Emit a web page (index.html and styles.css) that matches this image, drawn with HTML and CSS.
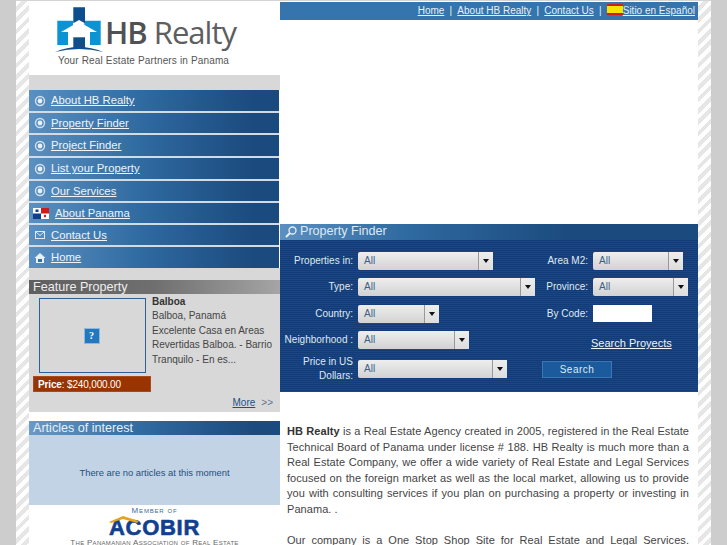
FILE: index.html
```html
<!DOCTYPE html>
<html lang="en">
<head>
<meta charset="utf-8">
<title>HB Realty</title>
<link rel="stylesheet" href="styles.css">
</head>
<body>
<div class="page">
  <aside class="left">
    <div class="logo">
      <div class="logo-row">
        <svg class="logo-mark" width="50" height="46" viewBox="55 7 50 46">
          <path d="M57.300 20.700H73V45H57.300zM84.300 20.700H100.700V45H84.300z" fill="#0e93d2"/>
          <path d="M73.300 7.300H85V23.300L79 20l-5.700 3.300z" fill="#0f4e8c"/>
          <path d="M79 21.700 97 32h-7v13h-5V37.300H73.300V45H68V32h-7z" fill="#fff"/>
          <path d="M73.300 37.300H85V48H73.300z" fill="#0f4e8c"/>
          <path d="M55 52q24-10 48.300 0-24-6-48.300 0z" fill="#0f4e8c"/>
        </svg>
        <span class="logo-text"><b>HB</b> Realty</span>
      </div>
      <div class="tagline">Your Real Estate Partners in Panama</div>
    </div>
    <div class="band"></div>
    <nav class="menu">
      <a class="item tall" href="#"><svg class="ico" width="14" height="14" viewBox="0 0 14 14"><circle cx="7" cy="7" r="4.500" fill="none" stroke="#cfe0ee" stroke-width="1.400"/><circle cx="7" cy="7" r="2.400" fill="#e8f0f6"/></svg><span>About HB Realty</span></a>
      <a class="item" href="#"><svg class="ico" width="14" height="14" viewBox="0 0 14 14"><circle cx="7" cy="7" r="4.500" fill="none" stroke="#cfe0ee" stroke-width="1.400"/><circle cx="7" cy="7" r="2.400" fill="#e8f0f6"/></svg><span>Property Finder</span></a>
      <a class="item tall" href="#"><svg class="ico" width="14" height="14" viewBox="0 0 14 14"><circle cx="7" cy="7" r="4.500" fill="none" stroke="#cfe0ee" stroke-width="1.400"/><circle cx="7" cy="7" r="2.400" fill="#e8f0f6"/></svg><span>Project Finder</span></a>
      <a class="item tall" href="#"><svg class="ico" width="14" height="14" viewBox="0 0 14 14"><circle cx="7" cy="7" r="4.500" fill="none" stroke="#cfe0ee" stroke-width="1.400"/><circle cx="7" cy="7" r="2.400" fill="#e8f0f6"/></svg><span>List your Property</span></a>
      <a class="item" href="#"><svg class="ico" width="14" height="14" viewBox="0 0 14 14"><circle cx="7" cy="7" r="4.500" fill="none" stroke="#cfe0ee" stroke-width="1.400"/><circle cx="7" cy="7" r="2.400" fill="#e8f0f6"/></svg><span>Our Services</span></a>
      <a class="item" href="#"><svg class="flag" width="16" height="11" viewBox="0 0 16 11"><rect width="16" height="11" fill="#fff"/><rect x="8" width="8" height="5.500" fill="#d21a1a"/><rect y="5.500" width="8" height="5.500" fill="#0d3f8c"/><rect x="2.500" y="1.500" width="3" height="2.500" fill="#0d3f8c"/><circle cx="12" cy="8" r="1.200" fill="#d21a1a"/></svg><span>About Panama</span></a>
      <a class="item" href="#"><svg class="ico" width="14" height="14" viewBox="0 0 14 14"><rect x="2.500" y="3.500" width="9" height="7" fill="none" stroke="#dfe9f2" stroke-width="1"/><path d="M2.500 3.500 7 7.500l4.500-4" fill="none" stroke="#dfe9f2"/></svg><span>Contact Us</span></a>
      <a class="item last" href="#"><svg class="ico" width="14" height="14" viewBox="0 0 14 14"><path d="M7 2 1.500 7H3v5h8V7h1.500z" fill="#e8f0f6"/><rect x="5" y="8" width="4" height="3" fill="#3a6d9f"/></svg><span>Home</span></a>
    </nav>
    <div class="band-small"></div>
    <h2 class="feature-head">Feature Property</h2>
    <section class="feature">
      <div class="feature-main">
        <div class="photo"><span class="broken">?</span></div>
        <div class="feature-text">
          <strong>Balboa</strong>
          <p>Balboa, Panamá</p>
          <p>Excelente Casa en Areas Revertidas Balboa. - Barrio Tranquilo - En es...</p>
        </div>
      </div>
      <div class="price"><b>Price</b>: $240,000.00</div>
      <div class="more"><a href="#">More</a><span>&gt;&gt;</span></div>
    </section>
    <h2 class="articles-head">Articles of interest</h2>
    <div class="articles">There are no articles at this moment</div>
    <div class="member">
      <div class="member-of">Member of</div>
      <div class="acobir">
        <svg class="roof" width="30" height="7" viewBox="0 0 30 7"><path d="M0 6 14 0l16 5-2 2L14 3 2 7z" fill="#e5a21c"/></svg>
        <span>ACOBIR</span>
      </div>
      <div class="assoc">The Panamanian Association of Real Estate Brokers and Developers</div>
    </div>
  </aside>
  <main class="right">
    <div class="topnav">
      <a href="#">Home</a><i>|</i><a href="#">About HB Realty</a><i>|</i><a href="#">Contact Us</a><i>|</i>
      <svg class="es" width="16" height="11" viewBox="0 0 16 11"><rect width="16" height="11" fill="#d01c1c"/><rect y="2" width="16" height="7" fill="#f6e300"/></svg><a href="#">Sitio en Español</a>
    </div>
    <div class="blank"></div>
    <h2 class="finder-head">
      <svg width="14" height="14" viewBox="0 0 14 14"><circle cx="8.500" cy="5.500" r="3.500" fill="none" stroke="#e8f0f6" stroke-width="1.300"/><path d="M6 8 2 12" stroke="#e8f0f6" stroke-width="2"/></svg>
      <span>Property Finder</span>
    </h2>
    <form class="finder">
      <div class="col-a">
        <label class="row"><span class="lab">Properties in:</span><span class="sel w135"><em>All</em><u></u></span></label>
        <label class="row"><span class="lab">Type:</span><span class="sel w178"><em>All</em><u></u></span></label>
        <label class="row"><span class="lab">Country:</span><span class="sel w81"><em>All</em><u></u></span></label>
        <label class="row"><span class="lab">Neighborhood :</span><span class="sel w111"><em>All</em><u></u></span></label>
        <label class="row price-row"><span class="lab">Price in US Dollars:</span><span class="sel w149"><em>All</em><u></u></span></label>
      </div>
      <div class="col-b">
        <label class="row"><span class="lab lab-b">Area M2:</span><span class="sel w91"><em>All</em><u></u></span></label>
        <label class="row"><span class="lab lab-b">Province:</span><span class="sel w95"><em>All</em><u></u></span></label>
        <label class="row"><span class="lab lab-b">By Code:</span><span class="code"></span></label>
        <a class="proyects" href="#">Search Proyects</a>
        <span class="search">Search</span>
      </div>
    </form>
    <article class="copy">
      <p><b>HB Realty</b> is a Real Estate Agency created in 2005, registered in the Real Estate Technical Board of Panama under license # 188. HB Realty is much more than a Real Estate Company, we offer a wide variety of Real Estate and Legal Services focused on the foreign market as well as the local market, allowing us to provide you with consulting services if you plan on purchasing a property or investing in Panama. .</p>
      <p class="copy-wide">Our company is a One Stop Shop Site for Real Estate and Legal Services. We can help you</p>
    </article>
  </main>
</div>
</body>
</html>
```
FILE: styles.css
```css
html,body{margin:0;padding:0;height:545px;overflow:hidden;background:#cdcdcd}
body{font-family:"Liberation Sans",Arial,sans-serif;font-size:11px;color:#333}
.page{width:669px;height:544px;margin-left:16px;padding:0 13px;display:flex;border-top:1px solid #d4d4d4;
 background:repeating-linear-gradient(135deg,#fff 0 4px,#e6e6e6 4px 8px) left/13px 100% no-repeat,
 repeating-linear-gradient(135deg,#fff 0 4px,#e6e6e6 4px 8px) right/13px 100% no-repeat;overflow:hidden}
a{color:inherit}
h2{margin:0;font:400 12.600px/15px "Liberation Sans",sans-serif}
.left{width:251px;flex:none;background:#fff}
.right{width:418px;flex:none;background:#fff}
.logo{height:74px;box-sizing:border-box;padding-top:6px}
.logo-row{display:flex;align-items:flex-start;padding-left:26px;height:48px}
.logo-mark{flex:none}
.logo-text{font:400 31px/38px "Open Sans",sans-serif;color:#5d5e60;letter-spacing:-1px;margin-top:6px;white-space:nowrap}
.logo-text b{font-weight:600;color:#505153}
.tagline{font:400 10px/12px "Liberation Sans",sans-serif;color:#555;padding-left:29px;letter-spacing:.15px}
.band{height:15px;background:#d8d8d8}
.menu{display:flex;flex-direction:column}
.item{height:22px;box-sizing:border-box;border-bottom:2px solid #d0dbe5;display:flex;align-items:center;color:#eef4f9;font:400 11.300px/13px "Liberation Sans",sans-serif;
 background:linear-gradient(90deg,#5b90c0 0,#2f6aa0 45%,#1b4a7e 90%);padding-left:4px;width:250px}
.item.tall{height:23px}
.item.last{height:21px;border-bottom:0}
.item span{text-decoration:underline;margin-left:4px}
.ico{flex:none}
.flag{flex:none;margin-right:2px}
.band-small{height:12px;background:#d8d8d8}
.feature-head{height:14px;line-height:14px;color:#eee;padding-left:4px;background:linear-gradient(90deg,#5f5f5f,#6f6f6f 50%,#a5a5a5)}
.feature{height:118px;box-sizing:border-box;background:#d8d8d8;padding:2px 0 0 10px;position:relative}
.feature-main{display:flex;gap:6px;height:80px}
.photo{width:105px;height:73px;border:1px solid #2f5f93;display:flex;align-items:center;justify-content:center;flex:none;margin-top:2px}
.broken{width:14px;height:14px;background:#2377bd;border:1px solid #8fb9dc;color:#fff;font:700 10px/14px "Liberation Serif",serif;text-align:center;margin-left:-2px}
.feature-text{font:400 10px/14.500px "Liberation Sans",sans-serif;color:#444;width:130px;margin-top:-1.500px}
.feature-text strong{display:block;color:#333}
.feature-text p{margin:0}
.price{width:118px;height:16px;box-sizing:border-box;margin:0 0 0 -6px;background:#993300;color:#fff;font:400 10px/15px "Liberation Sans",sans-serif;padding-left:4px;border:1px solid #a84a1e;white-space:nowrap;letter-spacing:-.15px}
.more{position:absolute;right:7px;bottom:3px;color:#1e4f86;font:400 10px/12px "Liberation Sans",sans-serif;display:flex;gap:6px}
.more span{color:#5c7691;font-size:10px}
.articles-head{margin-top:9px;height:14px;line-height:14px;color:#e8f0f6;padding-left:4px;background:linear-gradient(90deg,#6a9ac6,#2f6aa0 45%,#1b4a7e 90%)}
.articles{height:70px;background:#c2d3e5;color:#24507f;font:400 9.400px/76px "Liberation Sans",sans-serif;text-align:center}
.member{text-align:center}
.member-of{font:400 8px/9px "Liberation Sans",sans-serif;font-variant:small-caps;color:#3b6b9b;letter-spacing:.8px;margin-top:1px}
.acobir{position:relative;font:900 22px/20px "Liberation Sans",sans-serif;color:#11408f;height:20px;margin-top:3px}
.acobir span{-webkit-text-stroke:.6px #11408f;letter-spacing:.7px}
.roof{position:absolute;left:80px;top:-2px}
.assoc{font:400 8px/7px "Liberation Sans",sans-serif;font-variant:small-caps;color:#666;letter-spacing:.3px;padding:0 30px;margin-top:1px}
.topnav{margin-top:1px;height:18px;background:#3574ac;color:#e8f0f6;display:flex;align-items:center;justify-content:flex-end;padding-right:3px;font:400 10px/12px "Liberation Sans",sans-serif}
.topnav i{font-style:normal;margin:0 5.200px}
.es{flex:none;margin-top:-4px}
.blank{height:204px}
.finder-head{height:16px;line-height:15px;color:#dfe9f2;display:flex;align-items:center;gap:2px;padding-left:4px;background:linear-gradient(90deg,#5b90c0,#2f6aa0 30%,#1b4a7e 70%)}
.finder-head span{margin-top:-2px}
.finder{height:152px;box-sizing:border-box;background:repeating-linear-gradient(180deg,#133b78 0 1px,#1b4684 1px 2px);padding-top:12px;display:flex;color:#dfe9f2;font:400 10px/14px "Liberation Sans",sans-serif}
.col-a{width:255px;flex:none;display:flex;flex-direction:column;gap:8.300px}
.col-b{flex:1;display:flex;flex-direction:column;gap:8.300px;position:relative}
.row{display:flex;align-items:center;height:18px}
.price-row{height:28px;margin-top:-2px}
.lab{width:73px;text-align:right;margin-right:5px;flex:none}
.lab-b{width:53px}
.sel{height:18px;border-radius:2px;background:linear-gradient(180deg,#eee,#d2d2d2);display:flex;align-items:center;box-sizing:border-box;color:#3b5f8b;font:400 10px/18px "Liberation Sans",sans-serif}
.sel em{font-style:normal;flex:1;padding-left:6px}
.sel u{width:14px;height:18px;border-left:1px solid #999;background:linear-gradient(180deg,#eee,#ddd);position:relative;flex:none;text-decoration:none}
.sel u::after{content:"";position:absolute;left:4px;top:7px;border:3px solid transparent;border-top:4px solid #111;border-bottom:0}
.w135{width:135px}.w178{width:178px}.w81{width:81px}.w111{width:111px}.w149{width:149px}.w91{width:90px}.w95{width:95px}
.code{width:59px;height:17px;background:#fff}
.proyects{font:400 11px/13px "Liberation Sans",sans-serif;color:#eef4f9;position:absolute;left:56px;top:85px;white-space:nowrap}
.search{position:absolute;left:7px;top:109px;width:70px;height:17px;box-sizing:border-box;background:#1b5a9c;border:1px solid #3a78b4;color:#dfe9f2;text-align:center;font:400 10px/15px "Liberation Sans",sans-serif;letter-spacing:.5px}
.copy{padding:32px 9px 0 7px;font-size:11px;line-height:15.500px;text-align:justify;color:#444;letter-spacing:.06px}
.copy p{margin:0 0 15.500px}
.copy b{color:#333}
.copy-wide{word-spacing:1.500px}
```
